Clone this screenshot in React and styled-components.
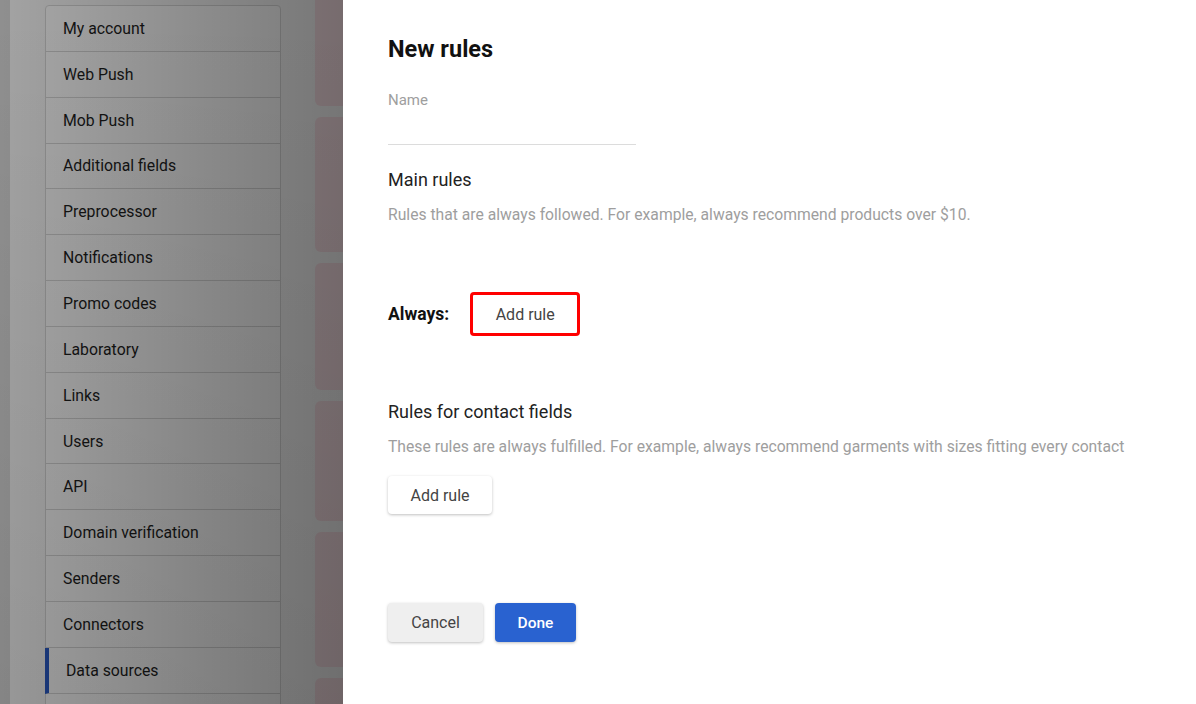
import React from "react";
import styled, { createGlobalStyle } from "styled-components";

/* ================= STYLES ================= */

const GlobalStyle = createGlobalStyle`
  html, body {
    margin: 0;
    padding: 0;
    width: 1196px;
    height: 704px;
    overflow: hidden;
    font-family: Roboto, "Liberation Sans", Arial, sans-serif;
  }
`;

const Page = styled.div`
  position: relative;
  width: 1196px;
  height: 704px;
  display: flex;
  background: #f8f8f8;
  overflow: hidden;
`;

const Rail = styled.div`
  width: 10px;
  flex-shrink: 0;
  background: #d9d9d9;
`;

const Content = styled.div`
  flex: 1;
  display: flex;
  gap: 34px;
  padding: 5px 0 0 35px;
`;

const Menu = styled.ul`
  list-style: none;
  margin: 0;
  padding: 0 0 30px;
  width: 234px;
  flex-shrink: 0;
  align-self: flex-start;
  background: #fff;
  border: 1px solid #d8d8d8;
  border-radius: 4px;
`;

const MenuItem = styled.li`
  box-sizing: border-box;
  height: 45.85px;
  display: flex;
  align-items: center;
  padding-left: 17px;
  border-bottom: 1px solid #d8d8d8;
  font-size: 15.8px;
  color: #1e1e1e;

  ${({ active }) =>
    active &&
    `
    margin-left: -1px;
    border-left: 4px solid #2a5cc8;
  `}
`;

const Cards = styled.div`
  display: flex;
  flex-direction: column;
  gap: 11px;
  margin-top: -20px;
  width: 300px;
`;

const Card = styled.div`
  background: #f8e0e5;
  border-radius: 6px;
  flex-shrink: 0;
`;

const Scrim = styled.div`
  position: absolute;
  inset: 0;
  background:
    linear-gradient(to bottom, rgba(0, 0, 0, 0) 0px, rgba(0, 0, 0, 0.07) 704px),
    linear-gradient(
      to right,
      rgba(0, 0, 0, 0.34) 0px,
      rgba(0, 0, 0, 0.45) 200px,
      rgba(0, 0, 0, 0.52) 343px
    );
`;

const Drawer = styled.aside`
  position: absolute;
  top: 0;
  right: 0;
  bottom: 0;
  width: 853px;
  background: #fff;
  padding: 35px 0 0 45px;
  box-sizing: border-box;
  color: #222;
`;

const Title = styled.h2`
  margin: 0;
  font-size: 23.5px;
  font-weight: 700;
  color: #111;
  line-height: 28px;
`;

const Field = styled.div`
  box-sizing: border-box;
  width: 248px;
  margin-top: 28px;
  border-bottom: 1px solid #dcdcdc;
  height: 54px;
`;

const FieldLabel = styled.label`
  display: block;
  font-size: 15px;
  color: #9e9e9e;
  line-height: 18px;
`;

const Section = styled.section`
  margin-top: ${({ top }) => top}px;
`;

const SectionTitle = styled.h3`
  margin: 0;
  font-size: 18px;
  font-weight: 400;
  color: #222;
  line-height: 21px;
`;

const Hint = styled.p`
  margin: 15px 0 0;
  font-size: 15.7px;
  color: #9e9e9e;
  line-height: 19px;
  white-space: nowrap;
`;

const RuleRow = styled.div`
  display: flex;
  align-items: center;
  gap: 21px;
  margin-top: ${({ top }) => top}px;
`;

const RowLabel = styled.span`
  font-size: 17.5px;
  font-weight: 700;
  color: #111;
`;

const Button = styled.button`
  box-sizing: border-box;
  height: ${({ h }) => h || 38}px;
  width: ${({ w }) => w}px;
  padding: 0;
  border-radius: 4px;
  font-family: inherit;
  font-size: ${({ variant }) => (variant === "primary" ? 15.5 : 16)}px;
  cursor: pointer;
  border: ${({ highlight }) => (highlight ? "3px solid #ff0000" : "none")};
  background: ${({ variant }) =>
    variant === "primary" ? "#2962d0" : variant === "muted" ? "#efefef" : "#fff"};
  color: ${({ variant }) => (variant === "primary" ? "#fff" : "#444")};
  font-weight: ${({ variant }) => (variant === "primary" ? 500 : 400)};
  box-shadow: ${({ highlight }) =>
    highlight ? "none" : "0 1px 3px rgba(0, 0, 0, 0.25)"};
`;

const AddButton = styled(Button)`
  margin-top: 20px;
`;

const Actions = styled.div`
  display: flex;
  gap: 12px;
  margin-top: 89px;
`;

/* ================= COMPONENT ================= */

const menu = [
  "My account",
  "Web Push",
  "Mob Push",
  "Additional fields",
  "Preprocessor",
  "Notifications",
  "Promo codes",
  "Laboratory",
  "Links",
  "Users",
  "API",
  "Domain verification",
  "Senders",
  "Connectors",
  "Data sources",
];

const cardHeights = [121, 135, 127, 120, 135, 120];

function App() {
  return (
    <>
      <GlobalStyle />
      <Page>
        <Rail />
        <Content>
          <Menu>
            {menu.map((item) => (
              <MenuItem key={item} active={item === "Data sources"}>
                {item}
              </MenuItem>
            ))}
          </Menu>
          <Cards>
            {cardHeights.map((h, i) => (
              <Card key={i} style={{ height: h }} />
            ))}
          </Cards>
        </Content>
        <Scrim />
        <Drawer>
          <Title>New rules</Title>
          <Field>
            <FieldLabel>Name</FieldLabel>
          </Field>

          <Section top={24}>
            <SectionTitle>Main rules</SectionTitle>
            <Hint>Rules that are always followed. For example, always recommend products over $10.</Hint>
          </Section>

          <RuleRow top={68}>
            <RowLabel>Always:</RowLabel>
            <Button highlight w={110} h={44}>
              Add rule
            </Button>
          </RuleRow>

          <Section top={65}>
            <SectionTitle>Rules for contact fields</SectionTitle>
            <Hint>
              These rules are always fulfilled. For example, always recommend garments with sizes fitting every contact
            </Hint>
            <AddButton w={104}>Add rule</AddButton>
          </Section>

          <Actions>
            <Button variant="muted" w={95} h={39}>
              Cancel
            </Button>
            <Button variant="primary" w={81} h={39}>
              Done
            </Button>
          </Actions>
        </Drawer>
      </Page>
    </>
  );
}

export default App;
